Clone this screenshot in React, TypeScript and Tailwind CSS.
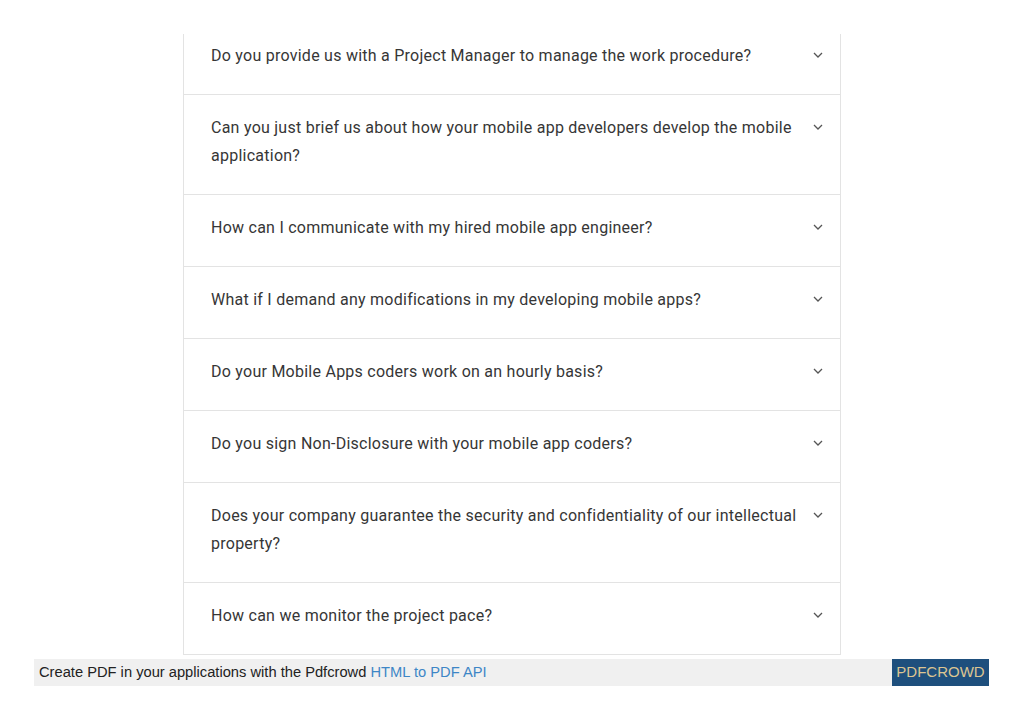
const faqs: { q: string; first?: boolean }[] = [
  { q: "Do you provide us with a Project Manager to manage the work procedure?", first: true },
  { q: "Can you just brief us about how your mobile app developers develop the mobile application?" },
  { q: "How can I communicate with my hired mobile app engineer?" },
  { q: "What if I demand any modifications in my developing mobile apps?" },
  { q: "Do your Mobile Apps coders work on an hourly basis?" },
  { q: "Do you sign Non-Disclosure with your mobile app coders?" },
  { q: "Does your company guarantee the security and confidentiality of our intellectual property?" },
  { q: "How can we monitor the project pace?" },
];

function Chevron() {
  return (
    <svg width="10" height="6" viewBox="0 0 10 6" fill="none" className="mt-[10px] shrink-0">
      <path d="M1 1l4 4 4-4" stroke="#555" strokeWidth="1.3" />
    </svg>
  );
}

export default function App() {
  return (
    <div className="relative h-[724px] w-[1023px] bg-white">
      <div className="ml-[183px] w-[658px] pt-[34px]">
        <div className="border-x border-b border-[#e3e3e3]">
          {faqs.map((f, i) => (
            <div
              key={i}
              className={`flex items-start justify-between pl-[27px] pr-[17px] ${
                f.first ? "pt-[8px] pb-[24px]" : "pt-[19px] pb-[24px]"
              } ${i > 0 ? "border-t border-[#e3e3e3]" : ""}`}
            >
              <p
                className="max-w-[592px] text-[16px] leading-[28px] tracking-[0.25px] text-[#363636]"
                style={{ fontFamily: "Roboto, 'Noto Sans', sans-serif" }}
              >
                {f.q}
              </p>
              <Chevron />
            </div>
          ))}
        </div>
      </div>
      <div className="absolute left-[34px] top-[659px] flex h-[27px] w-[955px] items-center justify-between bg-[#f0f0f0]">
        <span
          className="pl-[5px] text-[14.7px] text-[#222]"
          style={{ fontFamily: "'Liberation Sans', Arial, sans-serif" }}
        >
          Create PDF in your applications with the Pdfcrowd{" "}
          <span className="text-[#3d86c6]">HTML to PDF API</span>
        </span>
        <span
          className="flex h-[27px] w-[97px] items-center justify-center bg-[#1e4f7d] text-[15px] text-[#dcc592]"
          style={{ fontFamily: "'Liberation Sans', Arial, sans-serif" }}
        >
          PDFCROWD
        </span>
      </div>
    </div>
  );
}
